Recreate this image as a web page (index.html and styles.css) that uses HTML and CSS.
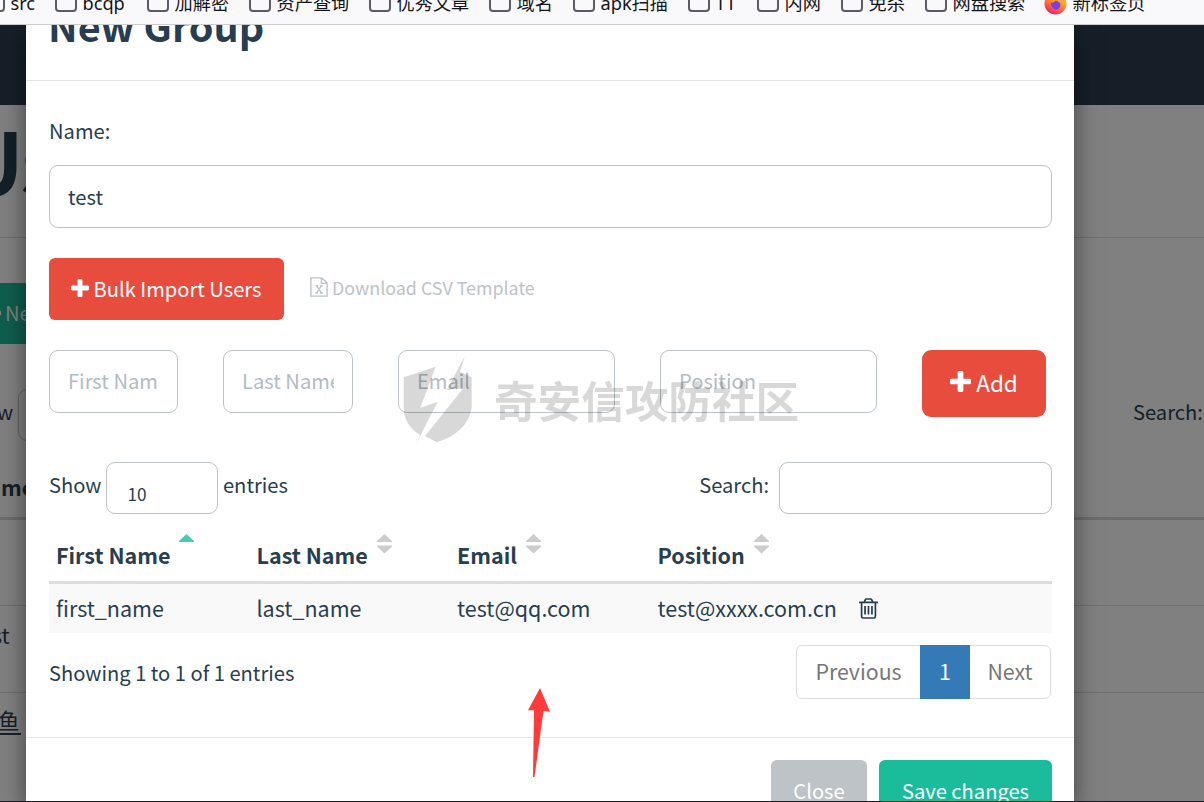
FILE: index.html
```html
<!DOCTYPE html>
<html lang="zh-CN">
<head>
<meta charset="utf-8">
<title>New Group</title>
<link rel="stylesheet" href="styles.css">
</head>
<body>
<svg width="0" height="0" class="defs">
  <symbol id="plus" viewBox="192 128 1408 1408"><path fill="currentColor" d="M1600 736v192q0 40-28 68t-68 28h-416v416q0 40-28 68t-68 28h-192q-40 0-68-28t-28-68v-416h-416q-40 0-68-28t-28-68v-192q0-40 28-68t68-28h416v-416q0-40 28-68t68-28h192q40 0 68 28t28 68v416h416q40 0 68 28t28 68z"/></symbol>
</svg>
<nav class="bookmarks">
  <span class="bm"><i class="folder"></i>src</span>
  <span class="bm"><i class="folder"></i>bcqp</span>
  <span class="bm"><i class="folder"></i>加解密</span>
  <span class="bm"><i class="folder"></i>资产查询</span>
  <span class="bm"><i class="folder"></i>优秀文章</span>
  <span class="bm"><i class="folder"></i>域名</span>
  <span class="bm"><i class="folder"></i>apk扫描</span>
  <span class="bm"><i class="folder"></i>TT</span>
  <span class="bm"><i class="folder"></i>内网</span>
  <span class="bm"><i class="folder"></i>免杀</span>
  <span class="bm"><i class="folder"></i>网盘搜索</span>
  <span class="bm"><svg class="fox" viewBox="0 0 24 24"><defs><linearGradient id="fx" x1=".8" y1="0" x2=".3" y2="1"><stop offset="0" stop-color="#ffe14a"/><stop offset=".5" stop-color="#ff8a2b"/><stop offset="1" stop-color="#f5156c"/></linearGradient></defs><circle cx="12" cy="12" r="11.5" fill="url(#fx)"/><path d="M7 11q3 1 5-2 6 1 5 6-2 4-6 3-4-2-4-7z" fill="#7a3fe0"/></svg>新标签页</span>
</nav>

<div class="viewport">
  <div class="page">
    <div class="topbar"></div>
    <h1 class="page-title">Us</h1>
    <div class="page-btn"><svg class="plus"><use href="#plus"/></svg><span>New Group</span></div>
    <div class="page-tools"><span class="tail">w</span><span class="page-select"></span><span class="page-search">Search:</span></div>
    <div class="page-head">me</div>
    <div class="page-row r1"></div>
    <div class="page-row r2">st</div>
    <div class="page-row r3"><a>鱼</a></div>
  </div>

  <section class="modal">
    <header class="modal-head"><h4>New Group</h4></header>
    <div class="modal-body">
      <label class="name-label">Name:</label>
      <input class="field name" value="test">
      <div class="import-row">
        <button class="btn red"><svg class="plus"><use href="#plus"/></svg>Bulk Import Users</button>
        <a class="csv"><svg viewBox="0 0 18 20" fill="none" stroke="currentColor" stroke-width="1.4"><path d="M.9.9h10.800l5.400 5.200v13H.9zM11.400.9v5.500h5.700"/><path d="M5.600 8.700h2.600M10.200 8.700h2.400M5.300 16h2.600M10 16h2.800M6.700 8.800l4.800 7.100M11.400 8.800L6.600 15.900"/></svg>Download CSV Template</a>
      </div>
      <div class="add-row">
        <input class="field" placeholder="First Name">
        <input class="field" placeholder="Last Name">
        <input class="field" placeholder="Email">
        <input class="field" placeholder="Position">
        <button class="btn red add"><svg class="plus"><use href="#plus"/></svg>Add</button>
      </div>
      <div class="tools">
        <span>Show</span><select class="len"><option>10</option></select><span>entries</span>
        <span class="s-label">Search:</span><input class="field search">
      </div>
      <div class="table">
        <div class="tr th">
          <span>First Name<svg class="sort on" viewBox="0 0 15 20"><path d="M7.500 0L15 7v1H0V7z"/></svg></span>
          <span>Last Name<svg class="sort" viewBox="0 0 15 20"><path d="M7.500 0L15 7v1H0V7zM0 11.500h15v1L7.500 19.500 0 12.500z"/></svg></span>
          <span>Email<svg class="sort" viewBox="0 0 15 20"><path d="M7.500 0L15 7v1H0V7zM0 11.500h15v1L7.500 19.500 0 12.500z"/></svg></span>
          <span>Position<svg class="sort" viewBox="0 0 15 20"><path d="M7.500 0L15 7v1H0V7zM0 11.500h15v1L7.500 19.500 0 12.500z"/></svg></span>
        </div>
        <div class="tr td">
          <span>first_name</span><span>last_name</span><span>test@qq.com</span><span>test@xxxx.com.cn</span>
          <svg class="trash" viewBox="192 128 1408 1536"><path fill="currentColor" d="M704 736v576q0 14-9 23t-23 9h-64q-14 0-23-9t-9-23v-576q0-14 9-23t23-9h64q14 0 23 9t9 23zm256 0v576q0 14-9 23t-23 9h-64q-14 0-23-9t-9-23v-576q0-14 9-23t23-9h64q14 0 23 9t9 23zm256 0v576q0 14-9 23t-23 9h-64q-14 0-23-9t-9-23v-576q0-14 9-23t23-9h64q14 0 23 9t9 23zm128 724v-948h-896v948q0 22 7 40.500t14.500 27 10.500 8.500h832q3 0 10.500-8.500t14.500-27 7-40.500zm-672-1076h448l-48-117q-7-9-17-11h-317q-10 2-17 11zm928 32v64q0 14-9 23t-23 9h-96v948q0 83-47 143.500t-113 60.500h-832q-66 0-113-58.500t-47-141.500v-952h-96q-14 0-23-9t-9-23v-64q0-14 9-23t23-9h309l70-167q15-37 54-63t79-26h320q40 0 79 26t54 63l70 167h309q14 0 23 9t9 23z"/></svg>
        </div>
      </div>
      <div class="foot-row">
        <span class="info">Showing 1 to 1 of 1 entries</span>
        <div class="pager"><span class="prev">Previous</span><span class="cur">1</span><span class="next">Next</span></div>
      </div>
    </div>
    <footer class="modal-foot">
      <button class="btn gray">Close</button>
      <button class="btn green">Save changes</button>
    </footer>
  </section>

  <div class="watermark">
    <svg viewBox="402 356 70 90"><path d="M403.700 377.300L435.700 366.700 420.300 407.700 437.700 401.700 415 446 420 435Q404 425 403.700 408zM465 355.700L460 371.700 471.700 377.300V408Q467 433 436.700 442.300L425 436 463.300 388.300 446.700 390z"/></svg>
    <span>奇安信攻防社区</span>
  </div>
  <svg class="arrow" viewBox="528 688 22 90"><path d="M540 688l10 23.700-6.500-1L534.500 777h-1.500l1-66.700h-6z"/></svg>
</div>
</body>
</html>
```
FILE: styles.css
```css
* { box-sizing: border-box; }
body {
  margin: 0; width: 1204px; height: 802px; overflow: hidden;
  display: flex; flex-direction: column;
  font: 20.140px/30px "Noto Sans CJK SC", sans-serif; color: #283e50;
  border-bottom: 1px solid #1c1b22;
}
.defs { position: absolute; }
input, select, button { font: inherit; color: inherit; margin: 0; }

.bookmarks {
  flex: none; height: 25px; overflow: hidden; background: #f9f9fb; border-bottom: 1px solid #ccc;
  display: grid; grid-template-columns: 72px 92px 102px 120px 120px 84px 115px 69px 84px 84px 119px 120px;
}
.bm { display: flex; align-items: center; gap: 5.500px; height: 30px; margin: -12px 0 0 -17px;
  font: 18.200px/30px "Noto Sans", "Noto Sans CJK SC", sans-serif; color: #15141a; white-space: nowrap; }
.folder { flex: none; width: 22px; height: 20px; border: 2px solid #5b5b66; border-radius: 4px; margin-top: -3px; }
.fox { flex: none; width: 23px; height: 23px; }

.viewport { flex: 1; position: relative; overflow: hidden; background: #808080; min-height: 0; }
.page { color: #141f28; height: 776px; overflow: hidden; }
.topbar { height: 80px; background: #161f28; }
.page-title { margin: 0; height: 133px; border-bottom: 1px solid #6f6f6f; font-size: 87px; line-height: 107px; font-weight: 700; text-indent: -41px; letter-spacing: -3px; }
.page-btn { margin: 45px 0 0; width: 160px; height: 61px; background: #0e5e4e; color: #808080; display: flex; align-items: center; padding-bottom: 2px; }
.page-btn .plus { width: 18px; height: 18px; margin: 0 4px 0 -17px; }
.page-tools { display: flex; margin-top: 45px; height: 52px; align-items: center; }
.tail { margin-left: -3px; width: 21px; margin-top: -6px; }
.page-select { width: 100px; height: 52px; border: 1px solid #5f6263; border-radius: 9px; }
.page-search { margin: -6px 0 0 1015px; }
.page-head { height: 79px; border-bottom: 3px solid #6c6c6c; font-size: 21.500px; font-weight: 700; line-height: 92px; padding-left: 1px; }
.page-row { border-bottom: 1px solid #6f6f6f; height: 87px; padding-top: 14px; font-size: 21.500px; }
.r1 { height: 86px; }
.r2 { text-indent: -8px; }
.r3 { border: 0; text-indent: -1px; padding-top: 12px; }
.r3 a { border-bottom: 2px solid #14222e; line-height: 26px; display: inline-block; height: 28px; padding-right: 1px; margin-top: -1px; }

.modal { position: absolute; left: 26px; top: 0; width: 1048px; height: 776px; background: #fff; box-shadow: 0 8px 23px rgba(0,0,0,.5); }
.modal-head { height: 56px; border-bottom: 1px solid #e5e5e5; padding-left: 22px; overflow: hidden; }
.modal-head h4 { margin: -20px 0 0; font-size: 39.600px; line-height: 40px; font-weight: 700; }
.modal-body { padding: 35px 22px 0 23px; height: 656px; }
.name-label { display: block; height: 49px; }
.field { display: block; width: 100%; height: 63px; padding: 0 18px 2px; border: 1px solid #bdc3c7; border-radius: 9px; background: #fff; outline: 0; }
.name { padding-bottom: 0; }
.field::placeholder { color: #b2bcc5; opacity: 1; }
.btn { border: 0; border-radius: 6px; color: #fff; display: flex; align-items: center; justify-content: center; white-space: nowrap; }
.red { background: #e84c3d; }
.plus { width: 18px; height: 18px; }
.import-row { display: flex; align-items: center; margin-top: 30px; height: 62px; }
.import-row .btn { width: 235px; height: 62px; padding: 0; }
.import-row .plus { margin: 0 4px 2px 0; }
.csv { display: flex; align-items: center; color: #bdc3c7; font-size: 17.850px; margin: -4px 0 0 26px; }
.csv svg { width: 18px; height: 20px; margin-right: 4px; }
.add-row { display: grid; grid-template-columns: 129px 130px 217px 217px 124px; gap: 45px; margin-top: 30px; height: 67px; }
.add { border-radius: 9px; height: 67px; font-size: 22.500px; padding: 0 0 3px 0; }
.add .plus { width: 21px; height: 21px; margin: 0 5px 1px 0; }
.tools { display: flex; align-items: center; margin-top: 45px; height: 52px; }
.tools span { padding-bottom: 6px; }
.len { appearance: none; width: 112px; height: 52px; margin: 0 4.500px 0 5px; border: 1px solid #bdc3c7; border-radius: 9px; background: #fff; padding: 12px 0 0 20px; font-size: 17.200px; }
.s-label { margin-left: auto; }
.tools .search { width: 273px; height: 52px; margin-left: 10px; }
.table { margin-top: 15px; }
.tr { display: grid; grid-template-columns: 200.500px 200.500px 200.500px 201px 1fr; padding-left: 7px; }
.th { height: 55px; border-bottom: 3px solid #ddd; font-size: 21.500px; font-weight: 700; line-height: 52px; }
.th span { display: flex; }
.sort { width: 15px; height: 20px; margin: 5px 0 0 9px; fill: #ccc; }
.sort.on { fill: #48c9b0; }
.td { height: 49px; background: #f9f9f9; line-height: 48px; font-size: 21.500px; }
.trash { width: 19px; height: 21px; margin-top: 14px; }
.foot-row { display: flex; justify-content: space-between; margin-top: 12px; }
.info { line-height: 55px; }
.pager { display: flex; width: 255px; height: 54px; margin-right: 1px; border: 1px solid #ddd; border-radius: 6px; color: #777; font-size: 21.300px; line-height: 50px; text-align: center; }
.prev { width: 123px; }
.cur { width: 50px; margin: -1px 0; padding-top: 1px; background: #337ab7; color: #fff; }
.next { flex: 1; }
.modal-foot { border-top: 1px solid #e5e5e5; display: flex; justify-content: flex-end; gap: 12px; padding: 22px 22px 0 0; }
.modal-foot .btn { height: 62px; padding: 0; }
.modal-foot .gray { width: 96px; background: #bdc3c7; }
.modal-foot .green { width: 173px; background: #1bbc9b; }

.watermark { position: absolute; left: 402px; top: 331px; display: flex; opacity: .15; color: #000; filter: blur(.6px); }
.watermark svg { width: 70px; height: 90px; }
.watermark span { margin-left: 22px; font-size: 43.600px; line-height: 86px; font-weight: 700; white-space: nowrap; }
.arrow { position: absolute; left: 528px; top: 663px; width: 22px; height: 90px; fill: #ff3b3b; }
```
